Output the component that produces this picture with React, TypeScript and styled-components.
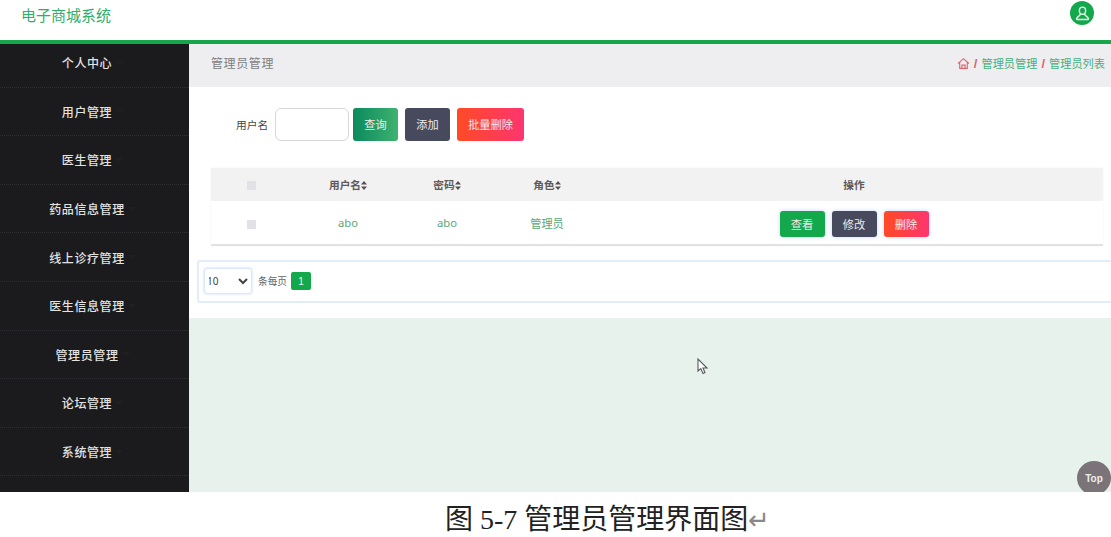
import * as React from 'react';
import styled, {createGlobalStyle} from 'styled-components';

const menus = [
  '个人中心',
  '用户管理',
  '医生管理',
  '药品信息管理',
  '线上诊疗管理',
  '医生信息管理',
  '管理员管理',
  '论坛管理',
  '系统管理',
];

const GlobalStyle = createGlobalStyle`
  html, body {
    margin: 0;
    padding: 0;
    background: #fff;
    overflow: hidden;
  }
  body {
    font-family: "Liberation Sans", "Noto Sans CJK SC", sans-serif;
  }
  * {
    box-sizing: border-box;
  }
`;

const SortMark: React.FC = () => (
  <SortSvg viewBox="0 0 6 9" width="6" height="9">
    <path d="M3 0 L6 3.6 H0 Z M3 9 L0 5.4 H6 Z" fill="#55504f" />
  </SortSvg>
);

const App: React.FC = () => {
  return (
    <>
      <GlobalStyle />
      <Page>
        <Screen>
          <Header>
            <Title>电子商城系统</Title>
            <Avatar>
              <svg viewBox="0 0 24 24" width="17" height="17" fill="none" stroke="#e9f8ef" strokeWidth="2">
                <ellipse cx="12" cy="8" rx="4.4" ry="5" />
                <path d="M9 13 C8.500 16 4 16 3.500 19.500 a1 1 0 0 0 1 1 H19.500 a1 1 0 0 0 1 -1 C20 16 15.500 16 15 13" />
              </svg>
            </Avatar>
          </Header>
          <Body>
            <Sidebar>
              {menus.map((m) => (
                <MenuItem key={m}>
                  {m}
                  <MenuArrow />
                </MenuItem>
              ))}
            </Sidebar>
            <Main>
              <CrumbBar>
                <CrumbTitle>管理员管理</CrumbTitle>
                <Crumbs>
                  <svg viewBox="0 0 24 24" width="13" height="13" fill="none" stroke="#e4606d" strokeWidth="2">
                    <path d="M2 12 L12 3 L22 12 M5 10 V21 H19 V10 M9 21 V15 H15 V21" />
                  </svg>
                  <Slash>/</Slash>
                  <CrumbLink>管理员管理</CrumbLink>
                  <Slash>/</Slash>
                  <CrumbLink>管理员列表</CrumbLink>
                </Crumbs>
              </CrumbBar>
              <Content>
                <SearchRow>
                  <SearchLabel>用户名</SearchLabel>
                  <SearchInput />
                  <QueryButton>查询</QueryButton>
                  <AddButton>添加</AddButton>
                  <BatchButton>批量删除</BatchButton>
                </SearchRow>
                <Table>
                  <colgroup>
                    <col width="80" />
                    <col width="114" />
                    <col width="84" />
                    <col width="116" />
                    <col width="498" />
                  </colgroup>
                  <thead>
                    <tr>
                      <Th><CheckBox /></Th>
                      <Th>用户名<SortMark /></Th>
                      <Th>密码<SortMark /></Th>
                      <Th>角色<SortMark /></Th>
                      <Th>操作</Th>
                    </tr>
                  </thead>
                  <tbody>
                    <tr>
                      <Td><CheckBox /></Td>
                      <Td>abo</Td>
                      <Td>abo</Td>
                      <Td>管理员</Td>
                      <Td>
                        <Actions>
                          <ViewButton>查看</ViewButton>
                          <EditButton>修改</EditButton>
                          <DeleteButton>删除</DeleteButton>
                        </Actions>
                      </Td>
                    </tr>
                  </tbody>
                </Table>
                <Pager>
                  <PageSelect defaultValue="10">
                    <option value="10">10</option>
                    <option value="20">20</option>
                    <option value="50">50</option>
                  </PageSelect>
                  <PagerText>条每页</PagerText>
                  <PageNumber>1</PageNumber>
                </Pager>
              </Content>
              <Footer />
            </Main>
          </Body>
          <Cursor viewBox="0 0 12 17" width="12" height="17">
            <path
              d="M1 1 V13 L3.800 10.600 L6 15.500 L8 14.500 L6 10 H10 Z"
              fill="#fff"
              stroke="#55595a"
              strokeWidth="1.1"
            />
          </Cursor>
          <TopButton>Top</TopButton>
        </Screen>
        <Caption>
          图 5-7 管理员管理界面图<ReturnMark>↵</ReturnMark>
        </Caption>
      </Page>
    </>
  );
};

export default App;

const Page = styled.div`
  width: 1111px;
  height: 537px;
  overflow: hidden;
`;

const Screen = styled.div`
  position: relative;
  height: 492px;
  overflow: hidden;
  display: flex;
  flex-direction: column;
`;

const Header = styled.header`
  height: 44px;
  flex: none;
  padding: 0 17px 4px 21px;
  display: flex;
  align-items: center;
  justify-content: space-between;
  background: #fff;
  border-bottom: 4px solid #17a649;
`;

const Title = styled.div`
  font-size: 15px;
  color: #2fae69;
  margin-top: -8px;
`;

const Avatar = styled.div`
  width: 24px;
  height: 24px;
  border-radius: 50%;
  background: #14a84c;
  display: flex;
  align-items: center;
  justify-content: center;
  margin-top: -10px;
`;

const Body = styled.div`
  flex: 1;
  min-height: 0;
  display: flex;
`;

const Sidebar = styled.nav`
  width: 189px;
  flex: none;
  background: #1b1a1c;
`;

const MenuItem = styled.div`
  position: relative;
  height: 48.6px;
  display: flex;
  align-items: center;
  justify-content: center;
  font-size: 12px;
  font-weight: 500;
  letter-spacing: 0.6px;
  color: #e2e2e2;
  border-bottom: 1px dotted #302f35;
  padding-right: 15px;

  &:first-child {
    height: 43.6px;
    padding-bottom: 5px;
  }
`;

const MenuArrow = styled.i`
  width: 0;
  height: 0;
  margin-left: 3px;
  margin-right: -11px;
  border-left: 4px solid transparent;
  border-right: 4px solid transparent;
  border-top: 4px solid #201f22;
`;

const Main = styled.main`
  flex: 1;
  min-width: 0;
  display: flex;
  flex-direction: column;
`;

const CrumbBar = styled.div`
  height: 43px;
  flex: none;
  padding: 0 6px 5px 22px;
  display: flex;
  align-items: center;
  justify-content: space-between;
  background: #eeeef0;
`;

const CrumbTitle = styled.div`
  font-size: 12px;
  color: #7d7d7f;
  letter-spacing: 0.6px;
  margin-top: -1px;
`;

const Crumbs = styled.div`
  display: flex;
  align-items: center;
  gap: 3px;
`;

const Slash = styled.span`
  font-size: 13px;
  font-weight: 700;
  color: #e4606d;
  margin: 0 1px;
`;

const CrumbLink = styled.span`
  font-size: 11.200px;
  color: #45b07c;
`;

const Content = styled.div`
  height: 231px;
  flex: none;
  padding: 21px 0 0 8px;
  background: #fff;
`;

const SearchRow = styled.div`
  height: 33px;
  padding-left: 39px;
  display: flex;
  align-items: center;
`;

const SearchLabel = styled.label`
  width: 39px;
  font-size: 10.700px;
  color: #444;
  margin-top: -1px;
`;

const SearchInput = styled.input`
  width: 74px;
  height: 33px;
  margin-right: 4px;
  border: 1px solid #d8d8d8;
  border-radius: 6px;
  background: #fff;
  outline: none;
`;

const Button = styled.button`
  height: 33px;
  padding: 0 0 1px;
  border: none;
  border-radius: 3px;
  color: #f2e9ea;
  font-family: inherit;
  font-size: 11.200px;
  display: flex;
  align-items: center;
  justify-content: center;
`;

const QueryButton = styled(Button)`
  width: 45px;
  margin-right: 7px;
  background: linear-gradient(90deg, #0b8a5d, #3eb270);
`;

const AddButton = styled(Button)`
  width: 45px;
  margin-right: 7px;
  background: #474a5d;
`;

const BatchButton = styled(Button)`
  width: 67px;
  background: linear-gradient(90deg, #ff4a25, #fd3570);
`;

const Table = styled.table`
  width: 892px;
  margin: 27px 0 0 14px;
  border-collapse: collapse;
  table-layout: fixed;
  border-bottom: 2px solid #e2e2e2;
  box-shadow: 0 0 2px rgba(0, 0, 0, 0.05);
`;

const Th = styled.th`
  height: 33px;
  padding: 0;
  background: #f2f2f3;
  font-size: 10.700px;
  font-weight: 700;
  color: #5f5a59;
  text-align: center;
`;

const Td = styled.td`
  height: 44px;
  padding: 0;
  background: #fff;
  font-family: "Noto Sans", "Noto Sans CJK SC", sans-serif;
  font-size: 11.200px;
  color: #55a87b;
  text-align: center;
`;

const SortSvg = styled.svg`
  vertical-align: -1px;
  margin-left: 0;
`;

const CheckBox = styled.span`
  display: inline-block;
  width: 9px;
  height: 9px;
  vertical-align: middle;
  background: #e1e1e6;
`;

const Actions = styled.div`
  display: flex;
  justify-content: center;
  gap: 7px;
  margin-top: 3px;
`;

const SmallButton = styled(Button)`
  width: 45px;
  height: 26px;
  font-family: "Liberation Serif", "Noto Sans CJK SC", serif;
  box-shadow: 0 0 4px rgba(90, 140, 230, 0.35);
`;

const ViewButton = styled(SmallButton)`
  background: #14a84c;
`;

const EditButton = styled(SmallButton)`
  background: #474a5d;
`;

const DeleteButton = styled(SmallButton)`
  background: linear-gradient(90deg, #ff4a25, #fd3570);
`;

const Pager = styled.div`
  width: 930px;
  height: 43px;
  margin-top: 14px;
  padding: 0 0 1px 5px;
  display: flex;
  align-items: center;
  background: #fff;
  border: 2px solid #e2edfb;
  border-right: none;
  border-radius: 3px 0 0 3px;
`;

const PageSelect = styled.select`
  width: 48px;
  height: 26px;
  padding: 0;
  text-indent: -2px;
  border: 1px solid #dde8fa;
  border-radius: 3px;
  background: #fff;
  color: #444;
  font-family: "Noto Sans", sans-serif;
  font-size: 10px;
  box-shadow: 0 0 3px rgba(120, 160, 240, 0.4);
  outline: none;
`;

const PagerText = styled.span`
  margin-left: 6px;
  font-size: 9.700px;
  color: #666;
`;

const PageNumber = styled.span`
  width: 20px;
  height: 18px;
  margin-left: 4px;
  border-radius: 2px;
  background: #14a84c;
  color: #e9f8ef;
  font-size: 10px;
  display: flex;
  align-items: center;
  justify-content: center;
`;

const Footer = styled.div`
  flex: 1;
  background: #e8f2ed;
`;

const Cursor = styled.svg`
  position: absolute;
  left: 697px;
  top: 358px;
`;

const TopButton = styled.div`
  position: absolute;
  left: 1077px;
  top: 461px;
  width: 34px;
  height: 34px;
  border-radius: 50%;
  background: #7a7478;
  color: #eee;
  font-size: 10px;
  font-weight: 700;
  display: flex;
  align-items: center;
  justify-content: center;
`;

const Caption = styled.div`
  height: 45px;
  padding-left: 445px;
  font-family: "Liberation Serif", "Noto Sans CJK SC", serif;
  font-size: 28px;
  line-height: 55px;
  color: #222;
  white-space: nowrap;
`;

const ReturnMark = styled.span`
  color: #888;
  font-size: 26px;
  line-height: 1;
`;
